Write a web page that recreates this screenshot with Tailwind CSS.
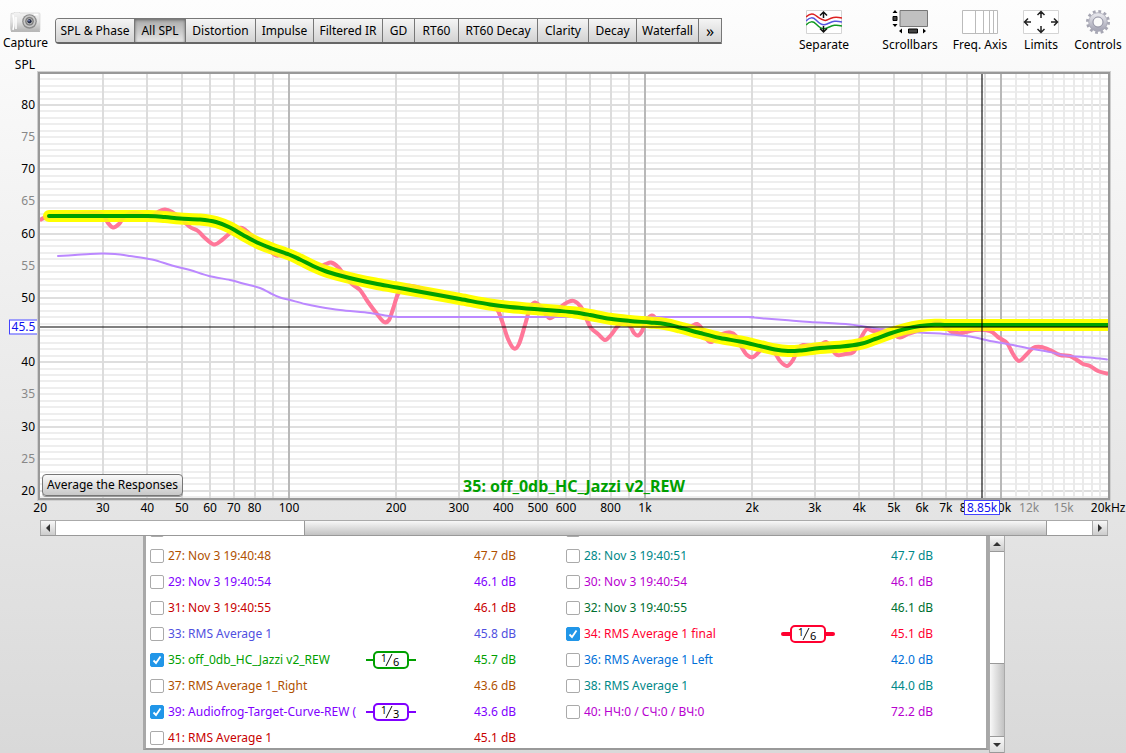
<!DOCTYPE html>
<html lang="en">
<head>
<meta charset="utf-8">
<title>All SPL</title>
<script src="https://cdn.jsdelivr.net/npm/@tailwindcss/browser@4"></script>
</head>
<body class="flex min-h-screen flex-col bg-linear-to-b from-[#fdfdfd] to-[#d9d9d9] font-['Noto_Sans',sans-serif] text-xs text-black">

<header class="flex h-14 shrink-0 items-start">
  <button class="mt-3 flex w-[51px] flex-col items-center leading-4">
    <svg class="h-[22px] w-8" viewBox="0 0 32 22">
      <defs>
        <linearGradient id="body" x1="0" y1="0" x2="0" y2="1"><stop offset="0" stop-color="#f4f4f4"/><stop offset=".5" stop-color="#e3e3e3"/><stop offset="1" stop-color="#b5b5b5"/></linearGradient>
        <radialGradient id="lens"><stop offset="0" stop-color="#222a40"/><stop offset=".3" stop-color="#555d70"/><stop offset=".55" stop-color="#b8b8b8"/><stop offset=".8" stop-color="#777"/><stop offset="1" stop-color="#999"/></radialGradient>
      </defs>
      <path d="M1 1.500 4 1 5 0h4l1 1h19q1 0 1 1v16q0 1-1 1H1q-1-3-.4-8Q1 5 1 1.500z" fill="url(#body)" stroke="#ccc" stroke-width=".6"/>
      <path d="M3 3q2 7 0 15M6 5v12" stroke="#fff" stroke-width="1.500" fill="none"/>
      <path d="M1 19.300h29" stroke="#aaa"/>
      <circle cx="19.500" cy="9.500" r="7.300" fill="#8b8b8b"/>
      <circle cx="19.500" cy="9.300" r="6" fill="#c9c9c9"/>
      <circle cx="19.500" cy="9.300" r="4.500" fill="url(#lens)"/>
      <circle cx="19.500" cy="9.300" r="2" fill="#222942"/>
      <circle cx="19" cy="8.800" r=".8" fill="#9aa5e0"/>
      <path d="M24 2.500h4" stroke="#fff" stroke-width="1.500"/>
    </svg>
    <span class="mt-px">Capture</span>
  </button>
  <nav id="tabs" class="mt-[18px] ml-1 flex h-[26px] overflow-hidden rounded-l border border-b-2 border-[#777] border-b-[#666]"></nav>
  <div class="mt-2 mr-0.5 ml-auto flex leading-4 whitespace-nowrap">
    <button class="flex w-[92px] flex-col items-center">
      <svg class="h-7 w-9" viewBox="0 0 36 28" fill="none">
        <path d="M.5 2.500h35v23H.5z" fill="#fff" stroke="#d4d4d4"/>
        <path d="M0 9C3 6 6 5 9 7s8 7 12 5 7-4 15-2" stroke="#d22" stroke-width="1.500"/>
        <path d="M0 13c4-4 7-4 10-1s6 6 11 4 7-4 15-2" stroke="#55d" stroke-width="1.500"/>
        <path d="M0 17c4-4 7-4 10-1s6 6 11 4 7-4 15-2" stroke="#192" stroke-width="1.500"/>
        <path d="M17.500 10V4M14 7.500 17.500 4 21 7.500M17.500 18v6M14 20.500l3.500 3.500 3.500-3.500" stroke="#111" stroke-width="1.500"/>
      </svg>
      <span class="mt-px">Separate</span>
    </button>
    <button class="flex w-20 flex-col items-center">
      <svg class="h-7 w-9" viewBox="0 0 36 28">
        <path d="M8 2.500h27.500v16H8z" fill="#c0c0c0" stroke="#777"/>
        <path d="M3 2 5.500 5h-5zM3 19l-2.500-3h5zM10 20.500v5l-3-2.500zM31 20.500v5l3-2.500z" fill="#000"/>
        <path d="M1 8.500h4v4H1zM16.500 21h9v4h-9z" fill="#444" stroke="#000"/>
      </svg>
      <span class="mt-px">Scrollbars</span>
    </button>
    <button class="flex w-[60px] flex-col items-center">
      <svg class="h-7 w-9" viewBox="0 0 36 28">
        <path d="M.5 2.500h35v23H.5z" fill="#fff" stroke="#bbb"/>
        <path d="M13.500 3v22M21.500 3v22M27.500 3v22M31.500 3v22" stroke="#bbb"/>
      </svg>
      <span class="mt-px">Freq. Axis</span>
    </button>
    <button class="flex w-[62px] flex-col items-center">
      <svg class="h-7 w-9" viewBox="0 0 36 28" fill="none">
        <path d="M.5 2.500h35v23H.5z" fill="#fff" stroke="#d4d4d4"/>
        <path d="M18 10V4M14.500 7 18 3.500 21.500 7M18 18v6M14.500 21l3.500 3.500 3.500-3.500M8 14H2M5 10.500 1.500 14 5 17.500M28 14h6M31 10.500l3.500 3.500-3.500 3.500" stroke="#222" stroke-width="1.500"/>
      </svg>
      <span class="mt-px">Limits</span>
    </button>
    <button class="flex w-[52px] flex-col items-center">
      <svg class="h-7 w-9" viewBox="0 0 36 28" fill="none">
        <defs><linearGradient id="gear" x1="0" y1="0" x2="0" y2="1"><stop offset="0" stop-color="#e4e4ea"/><stop offset="1" stop-color="#a9a9b8"/></linearGradient></defs>
        <circle cx="18" cy="14" r="10.500" stroke="#a6a6b3" stroke-width="3" stroke-dasharray="2.750 2.750"/>
        <circle cx="18" cy="14" r="7" stroke="url(#gear)" stroke-width="5"/>
        <circle cx="18" cy="14" r="9.300" stroke="#a5a5b2" stroke-width=".7"/>
        <circle cx="18" cy="14" r="5" stroke="#8f8fa0" stroke-width="1" fill="#fafafa"/>
      </svg>
      <span class="mt-px">Controls</span>
    </button>
  </div>
</header>

<div class="h-4 w-[35px] shrink-0 text-right leading-[18px]">SPL</div>

<main class="flex min-h-[300px] grow">
  <div id="levels" class="relative my-0.5 w-[38px] shrink-0"></div>
  <section class="relative mr-4 grow border-2 border-[#999] bg-white shadow-[0_0_0_1px_#cfcfcf]">
    <svg id="plot" class="absolute inset-0 size-full" viewBox="40 74 1068 424" preserveAspectRatio="none" fill="none"></svg>
    <button class="absolute bottom-0.5 left-0.5 h-[22px] w-[141px] rounded border border-[#777] bg-linear-to-b from-[#fafafa] to-[#c8c8c8] leading-5 whitespace-nowrap shadow-[0_1px_0_#999]">Average the Responses</button>
    <p class="absolute inset-x-0 bottom-0.5 text-center text-base leading-5 font-bold text-[#00a000]">35: off_0db_HC_Jazzi v2_REW</p>
  </section>
</main>

<div class="mr-[18px] ml-10 h-5 shrink-0"><div id="freqs" class="relative h-5 leading-4"></div></div>

<div class="mr-[18px] ml-10 flex h-4 shrink-0 border-y border-t-[#aaa] border-b-[#999] bg-white">
  <button aria-label="Scroll left" class="flex w-4 items-center justify-center border-x border-[#aaa] bg-linear-to-b from-[#f8f8f8] to-[#ccc]"><svg class="h-2 w-1" viewBox="0 0 4 8"><path d="M4 0v8L0 4z" fill="#333"/></svg></button>
  <div class="grow-[248]"></div>
  <div class="grow-[743] border-x border-[#999] bg-linear-to-b from-[#f8f8f8] to-[#c2c2c2]"></div>
  <div class="grow-[45]"></div>
  <button aria-label="Scroll right" class="flex w-4 items-center justify-center border-x border-[#aaa] bg-linear-to-b from-[#f8f8f8] to-[#ccc]"><svg class="h-2 w-1" viewBox="0 0 4 8"><path d="M0 0v8l4-4z" fill="#333"/></svg></button>
</div>

<div class="mr-4 ml-[38px] flex h-[217px] shrink-0 justify-center">
  <div class="h-[214px] w-[846px] overflow-hidden border-x-[3px] border-b-2 border-x-[#a8a8a8] border-b-[#999] bg-white">
    <table class="-mt-[19px] w-full table-fixed border-collapse">
      <colgroup><col class="w-[21px]"><col class="w-[193px]"><col class="w-[62px]"><col class="w-[140px]"><col class="w-[21px]"><col class="w-[194px]"><col class="w-[62px]"><col></colgroup>
      <tbody id="rows"></tbody>
    </table>
  </div>
  <div class="flex w-4 flex-col border-x border-[#aaa] bg-white">
    <button aria-label="Scroll up" class="flex h-4 shrink-0 items-center justify-center border-b border-[#999] bg-linear-to-b from-[#f8f8f8] to-[#ccc]"><svg class="h-1 w-2" viewBox="0 0 8 4"><path d="M0 4h8L4 0z" fill="#333"/></svg></button>
    <div class="grow-[112]"></div>
    <div class="grow-[72] border-y border-[#999] bg-linear-to-r from-[#f8f8f8] to-[#c2c2c2]"></div>
    <button aria-label="Scroll down" class="flex h-4 shrink-0 items-center justify-center border-b border-[#999] bg-linear-to-b from-[#f8f8f8] to-[#ddd]"><svg class="h-1 w-2" viewBox="0 0 8 4"><path d="M0 0h8L4 4z" fill="#333"/></svg></button>
  </div>
</div>

<script>
const $ = id => document.getElementById(id);

// Graph tabs
const tabs = [['SPL &amp; Phase','w-[78px]'],['All SPL','w-[51px]'],['Distortion','w-[70px]'],['Impulse','w-[58px]'],['Filtered IR','w-[69px]'],['GD','w-8'],['RT60','w-11'],['RT60 Decay','w-[79px]'],['Clarity','w-[51px]'],['Decay','w-12'],['Waterfall','w-[62px]'],['»','w-[23px]']];
$('tabs').innerHTML = tabs.map(([t, w], i) =>
  `<button class="${w} ${i ? 'border-l border-[#777]' : ''} ${i === 1 ? 'bg-linear-to-b from-[#aaa] to-[#e6e6e6] shadow-[inset_0_1px_3px_#666]' : 'bg-linear-to-b from-[#f5f5f5] to-[#d2d2d2]'} ${i === 11 ? 'text-base leading-4' : 'leading-[22px]'} whitespace-nowrap">${t}</button>`).join('');

// Axis mapping
const fx = f => 289 + 356 * Math.log10(f / 100);
const ly = d => 105 + (80 - d) * 6.43;

// Catmull-Rom curve through the points
function curve(s) {
  const p = s.trim().split(' ').map(q => q.split(',').map(Number));
  let d = `M${p[0]}`;
  for (let i = 0; i < p.length - 1; i++) {
    const a = p[i - 1] || p[i], b = p[i], c = p[i + 1], e = p[i + 2] || c;
    d += `C${b[0] + (c[0] - a[0]) / 6},${b[1] + (c[1] - a[1]) / 6} ${c[0] - (e[0] - b[0]) / 6},${c[1] - (e[1] - b[1]) / 6} ${c}`;
  }
  return d;
}
const line = (d, c, w, o = 1) => `<path d="${d}" stroke="${c}" stroke-width="${w}" stroke-opacity="${o}" stroke-linecap="round" stroke-linejoin="round" vector-effect="non-scaling-stroke"/>`;

let g = '';
for (let d = 84; d >= 19; d--) if (d % 10) g += line(`M40 ${Math.round(ly(d))}H1108`, '#eeeeee', 2);
for (let d = 80; d >= 20; d -= 10) g += line(`M40 ${Math.round(ly(d))}H1108`, '#dedede', 2);
for (let k = 11; k < 20; k++) g += line(`M${Math.round(fx(k * 1000))} 74V498`, '#eaeaea', 2);
for (const m of [10, 100, 1000]) for (let k = 2; k < 10; k++) if (m * k > 20) g += line(`M${Math.round(fx(m * k))} 74V498`, '#dcdcdc', 2);
for (const f of [100, 1000, 10000]) g += line(`M${Math.round(fx(f))} 74V498`, '#b8b8b8', 2);

const pink = curve('41,219.500 48,217 80,214 95,213 103,215 108,223 113,227.500 119,224 125,216 135,213 150,217 158,212 165,209.500 172,212 180,218 190,227 198,231 205,238 214,244.500 222,240 229,234 236,229 242,228 250,234 258,242 268,249 276,255.500 284,255 300,259 315,268 325,264.500 331,262.500 338,267 345,276 352,284 360,290 368,302 377,314 384,322 389,320 393,309 398,294 404,287 412,286 430,291 450,297 470,301 490,304 497,309 502,321 508,339 514,348.500 519,344 525,325 530,308 535,302.500 542,308 549,318 556,314 562,306 568,302 574,301 581,307 586,318 591,328 598,334 605,340 611,335 617,327 624,322 630,326 634,333 638,335.500 642,331 646,321 652,315.500 658,320 670,324 685,328 692,326 697,324 702,329 706,338 711,342 717,338 722,334 730,332.500 736,336 741,346 747,355 753,357 760,351 768,346 775,353 780,361 787,366 793,360 798,349 803,345 812,346 820,345 826,342 831,348 837,355 845,354 853,352.500 858,344 862,336 867,329 873,331 882,330 892,334 900,337.500 908,334 920,330 930,325 938,322 945,327 952,332 962,333 975,330 990,331 998,337 1007,343 1013,354 1019,361 1026,355 1033,348 1041,347 1050,350 1060,355 1070,356 1077,360 1083,364 1090,366 1098,371 1107,373.500');
const green = curve('49,216 100,216 148,216 165,217 180,218.500 200,219.500 216,222 230,227.500 243,235 257,242.500 272,248.500 289,254.500 300,259.500 313,266 325,271 340,275.500 356,279.500 375,283.500 397,287.500 427,293 460,299 490,304.500 510,307 540,309.500 560,311 575,312.500 590,315 610,318.800 630,321 650,322.500 665,324 680,327.500 700,333 720,338 740,341.500 760,346 775,349.500 788,351 800,350.500 820,348 842,346.500 860,344 875,339 890,333.500 905,329 920,326 935,324.700 950,325 1000,325 1115,325');
const purple = curve('58,256 75,255 90,254 103,253.600 115,254 130,256 152,259.500 172,265.500 190,270 209,276 230,280 245,284 260,288 270,293 280,297.500 290,300 305,304 320,307 340,310 370,313 385,315.500 398,317 410,317 500,317 730,317 750,317.300 765,318.500 785,320 810,322 850,324.500 880,329 920,332.500 945,334 970,336.500 990,341 1005,343.500 1030,348.500 1050,352 1065,355.500 1090,357.500 1107,359.500');
g += line(pink, '#ff7799', 4) + line(purple, '#bb88ff', 2) + line(green, '#ffff00', 12) + line(pink, '#ff7799', 4, 0.15) + line(green, '#00a000', 4);
g += line('M40 327H1108', '#000', 2, 0.5) + line('M982 74V498', '#000', 2, 0.55);
$('plot').innerHTML = g;

// Level and frequency labels, placed by value
const top_ = d => (ly(d) - 74) / 4.24, left = f => (fx(f) - 40) / 10.68;
for (let d = 80; d >= 20; d -= 5)
  $('levels').innerHTML += `<span class="absolute right-[3px] -translate-y-1/2 leading-4 ${d % 10 ? 'text-[#888]' : ''}" style="top:${top_(d)}%">${d}</span>`;
$('levels').innerHTML += `<span class="absolute right-0 flex h-[15px] w-[29px] -translate-y-1/2 items-center justify-center border border-[#44f] bg-white text-[#11e]" style="top:${top_(45.5)}%">45.5</span>`;
const fl = [[20,'20'],[30,'30'],[40,'40'],[50,'50'],[60,'60'],[70,'70'],[80,'80'],[100,'100'],[200,'200'],[300,'300'],[400,'400'],[500,'500'],[600,'600'],[800,'800'],[1000,'1k'],[2000,'2k'],[3000,'3k'],[4000,'4k'],[5000,'5k'],[6000,'6k'],[7000,'7k'],[8000,'8k'],[10000,'10k'],[12000,'12k'],[15000,'15k'],[20000,'20kHz']];
$('freqs').innerHTML = fl.map(([f, t]) => `<span class="absolute top-0 -translate-x-1/2 ${f === 12000 || f === 15000 ? 'text-[#888]' : ''}" style="left:${left(f)}%">${t}</span>`).join('')
  + `<span class="absolute top-0 flex h-[15px] w-9 -translate-x-1/2 items-center justify-center border border-[#44f] bg-white text-[#11e]" style="left:${left(8850)}%">8.85k</span>`;

// Measurement list: name, level, colour, smoothing, stub width
const data = [
  ['','',''],['','',''],
  ['27: Nov 3 19:40:48','47.7 dB','#b05000'],['28: Nov 3 19:40:51','47.7 dB','#008888'],
  ['29: Nov 3 19:40:54','46.1 dB','#8000ff'],['30: Nov 3 19:40:54','46.1 dB','#b800d0'],
  ['31: Nov 3 19:40:55','46.1 dB','#c80000'],['32: Nov 3 19:40:55','46.1 dB','#007030'],
  ['33: RMS Average 1','45.8 dB','#5050e0'],['34: RMS Average 1 final','45.1 dB','#ff0030','6',4],
  ['35: off_0db_HC_Jazzi v2_REW','45.7 dB','#00a000','6',2],['36: RMS Average 1 Left','42.0 dB','#0070d8'],
  ['37: RMS Average 1_Right','43.6 dB','#b05000'],['38: RMS Average 1','44.0 dB','#008888'],
  ['39: Audiofrog-Target-Curve-REW (','43.6 dB','#8000ff','3',2],['40: НЧ:0 / СЧ:0 / ВЧ:0','72.2 dB','#b800d0'],
  ['41: RMS Average 1','45.1 dB','#c80000']];
const cell = (r, i) => r ? `
  <td class="p-0 pl-1"><div class="grid size-[14px]">
    <input type="checkbox" id="m${i}" ${r[3] ? 'checked' : ''} class="peer size-[14px] appearance-none rounded-xs border border-[#aaa] bg-white [grid-area:1/1] checked:border-[#2196e8] checked:bg-[#2196e8]">
    <svg class="pointer-events-none hidden size-[14px] [grid-area:1/1] peer-checked:block" viewBox="0 0 14 14"><path d="M3.500 7.500 6 10l4.500-6.500" fill="none" stroke="#fff" stroke-width="1.800"/></svg>
  </div></td>
  <td class="p-0 pl-px whitespace-nowrap"><label for="m${i}" style="color:${r[2]}">${r[0]}</label></td>
  <td class="p-0">${r[3] ? `<svg class="mx-auto h-5 w-[54px]" viewBox="0 0 54 20" font-size="11"><path d="M2 10h50" stroke="${r[2]}" stroke-width="${r[4]}" stroke-linecap="${r[4] > 2 ? 'round' : 'butt'}"/><rect x="10" y="2" width="34" height="16" rx="4" fill="#fff" stroke="${r[2]}" stroke-width="2"/><text x="17" y="12" font-size="10">1</text><path d="m22 16 6-12" stroke="#111"/><text x="29" y="16">${r[3]}</text></svg>` : ''}</td>
  <td class="p-0 pl-[52px]" style="color:${r[2]}">${r[1]}</td>` : '<td colspan="4" class="p-0"></td>';
let rows = '';
for (let i = 0; i < data.length; i += 2) rows += `<tr class="h-[26px]">${cell(data[i], i)}${cell(data[i + 1], i + 1)}</tr>`;
$('rows').innerHTML = rows;
</script>
</body>
</html>
